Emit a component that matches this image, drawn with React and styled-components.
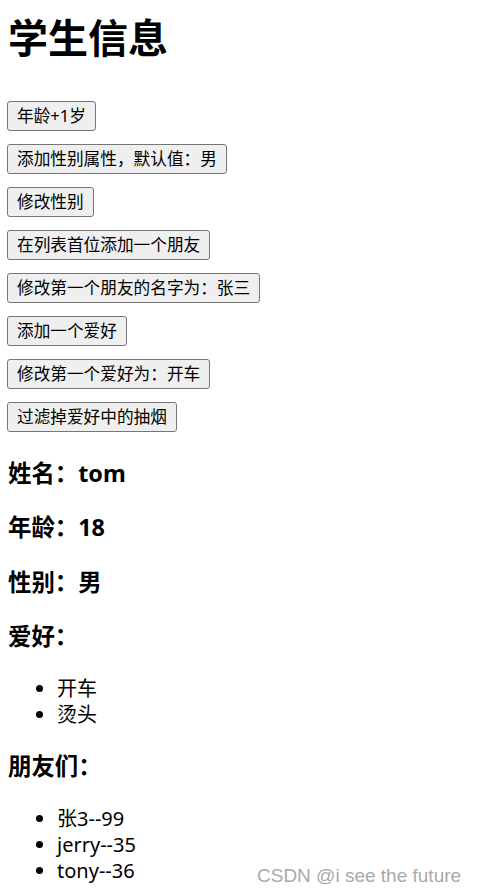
import React, { useState } from "react";
import styled, { createGlobalStyle } from "styled-components";

const GlobalStyle = createGlobalStyle`
    html, body {
        margin: 0;
        padding: 0;
        background: #ffffff;
    }
    body {
        font-family: "Noto Sans", "Noto Sans CJK SC", sans-serif;
        color: #000000;
    }
`;

const actions = [
    "年龄+1岁",
    "添加性别属性，默认值：男",
    "修改性别",
    "在列表首位添加一个朋友",
    "修改第一个朋友的名字为：张三",
    "添加一个爱好",
    "修改第一个爱好为：开车",
    "过滤掉爱好中的抽烟",
];

function App() {
    const [student] = useState({
        name: "tom",
        age: 18,
        sex: "男",
        hobby: ["开车", "烫头"],
        friends: [
            { name: "张3", age: 99 },
            { name: "jerry", age: 35 },
            { name: "tony", age: 36 },
        ],
    });

    return (
        <Page>
            <GlobalStyle />
            <Title>学生信息</Title>
            <ButtonList>
                {actions.map((label) => (
                    <ActionButton key={label}>{label}</ActionButton>
                ))}
            </ButtonList>
            <InfoTitle>姓名：{student.name}</InfoTitle>
            <InfoTitle>年龄：{student.age}</InfoTitle>
            <InfoTitle>性别：{student.sex}</InfoTitle>
            <InfoTitle>爱好：</InfoTitle>
            <List>
                {student.hobby.map((h) => (
                    <Item key={h}>{h}</Item>
                ))}
            </List>
            <InfoTitle>朋友们：</InfoTitle>
            <List>
                {student.friends.map((f) => (
                    <Item key={f.name}>
                        {f.name}--{f.age}
                    </Item>
                ))}
            </List>
            <Watermark>CSDN @i see the future</Watermark>
        </Page>
    );
}

const Page = styled.div`
    position: relative;
    box-sizing: border-box;
    height: 893px;
    overflow: hidden;
    padding: 12px 7px 0;
`;

const Title = styled.h1`
    margin: 0 0 0 1px;
    font-size: 40px;
    line-height: 52px;
    font-weight: 700;
`;

const ButtonList = styled.div`
    display: flex;
    flex-direction: column;
    align-items: flex-start;
    gap: 13px;
    margin-top: 37px;
    padding-bottom: 2px;
`;

const ActionButton = styled.button`
    height: 30px;
    padding: 0 9px;
    border: 1px solid #767676;
    border-radius: 3px;
    background-color: #efefef;
    color: #000000;
    font-family: "Noto Sans", "Noto Sans CJK SC", sans-serif;
    font-size: 16.67px;
    line-height: 28px;
    cursor: pointer;
`;

const InfoTitle = styled.h3`
    margin: 23.5px 0 23.5px 1px;
    font-size: 23.4px;
    line-height: 31px;
    font-weight: 700;
`;

const List = styled.ul`
    margin: 23.5px 0;
    padding-left: 50px;
    font-size: 20px;
    line-height: 26px;
`;

const Item = styled.li``;

const Watermark = styled.div`
    position: absolute;
    left: 257px;
    top: 865px;
    font-family: "Liberation Sans", Arial, sans-serif;
    font-size: 19px;
    line-height: 22px;
    color: #a9a9a9;
    text-shadow: 0 0 1px rgba(255, 255, 255, 0.8);
    white-space: nowrap;
`;

export default App;
